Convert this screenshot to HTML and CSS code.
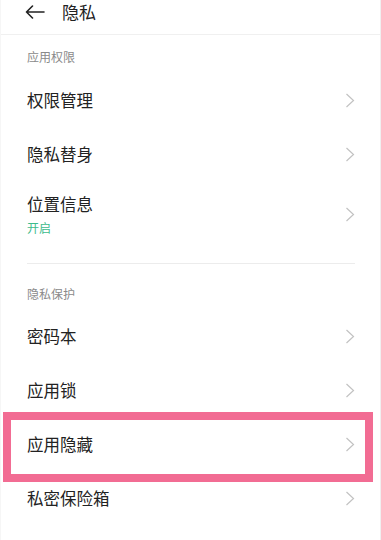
FILE: index.html
```html
<!DOCTYPE html>
<html lang="zh">
<head>
<meta charset="utf-8">
<link rel="stylesheet" href="styles.css">
</head>
<body>
<div class="page">
  <div class="header">
    <svg class="back" width="20" height="14" viewBox="0 0 20 14"><path d="M1.5 7H19M7.5 1L1.5 7L7.5 13" fill="none" stroke="#222" stroke-width="1.6" stroke-linecap="round" stroke-linejoin="round"/></svg>
    <span class="title">隐私</span>
  </div>

  <div class="group-label first">应用权限</div>
  <div class="row"><span class="row-title">权限管理</span><svg class="chev" width="10" height="15" viewBox="0 0 10 15"><polyline points="1.5,1 8.5,7.5 1.5,14" fill="none" stroke="#c2c2c2" stroke-width="1.2"/></svg></div>
  <div class="row"><span class="row-title">隐私替身</span><svg class="chev" width="10" height="15" viewBox="0 0 10 15"><polyline points="1.5,1 8.5,7.5 1.5,14" fill="none" stroke="#c2c2c2" stroke-width="1.2"/></svg></div>
  <div class="row tall">
    <div class="row-text"><span class="row-title">位置信息</span><span class="row-sub">开启</span></div>
    <svg class="chev" width="10" height="15" viewBox="0 0 10 15"><polyline points="1.5,1 8.5,7.5 1.5,14" fill="none" stroke="#c2c2c2" stroke-width="1.2"/></svg>
  </div>
  <div class="divider"></div>

  <div class="group-label second">隐私保护</div>
  <div class="row"><span class="row-title">密码本</span><svg class="chev" width="10" height="15" viewBox="0 0 10 15"><polyline points="1.5,1 8.5,7.5 1.5,14" fill="none" stroke="#c2c2c2" stroke-width="1.2"/></svg></div>
  <div class="row"><span class="row-title">应用锁</span><svg class="chev" width="10" height="15" viewBox="0 0 10 15"><polyline points="1.5,1 8.5,7.5 1.5,14" fill="none" stroke="#c2c2c2" stroke-width="1.2"/></svg></div>
  <div class="row"><span class="row-title">应用隐藏</span><svg class="chev" width="10" height="15" viewBox="0 0 10 15"><polyline points="1.5,1 8.5,7.5 1.5,14" fill="none" stroke="#c2c2c2" stroke-width="1.2"/></svg></div>
  <div class="row"><span class="row-title">私密保险箱</span><svg class="chev" width="10" height="15" viewBox="0 0 10 15"><polyline points="1.5,1 8.5,7.5 1.5,14" fill="none" stroke="#c2c2c2" stroke-width="1.2"/></svg></div>

  <div class="highlight"></div>
</div>
</body>
</html>
```

FILE: styles.css
```css
html, body {
  margin: 0;
  padding: 0;
  background: #fff;
}
body {
  font-family: "Noto Sans CJK SC", "Noto Sans", sans-serif;
  color: #222;
}
.page {
  position: relative;
  width: 381px;
  height: 540px;
  overflow: hidden;
  box-sizing: border-box;
  border-right: 1px solid #f0f0f0;
  border-left: 1px solid #f6f6f6;
}
.header {
  height: 31px;
  padding-top: 3px;
  border-bottom: 1px solid #f0f0f0;
  display: flex;
  align-items: flex-start;
  padding-left: 24px;
}
.back {
  margin-top: 2px;
}
.title {
  margin-left: 17px;
  font-size: 17px;
  line-height: 18px;
  color: #222;
}
.group-label {
  padding-left: 26px;
  font-size: 12px;
  line-height: 16px;
  color: #8a8a8a;
}
.group-label.first {
  padding-top: 14px;
  padding-bottom: 8px;
}
.group-label.second {
  padding-top: 22px;
  padding-bottom: 7px;
}
.row {
  height: 54px;
  display: flex;
  align-items: center;
  justify-content: space-between;
  padding-left: 26px;
  padding-right: 25px;
}
.row.tall {
  height: 66px;
}
.row-text {
  display: flex;
  flex-direction: column;
}
.row-title {
  font-size: 16.5px;
  line-height: 22px;
  color: #222;
}
.row-sub {
  font-size: 12px;
  line-height: 16px;
  margin-top: 5px;
  color: #3dbb8c;
}
.chev {
  display: block;
}
.divider {
  height: 1px;
  background: #ececec;
  margin: 16px 25px 0 26px;
}
.highlight {
  position: absolute;
  left: 2px;
  top: 412px;
  width: 370px;
  height: 70px;
  box-sizing: border-box;
  border: 8px solid #f26c93;
}
```
